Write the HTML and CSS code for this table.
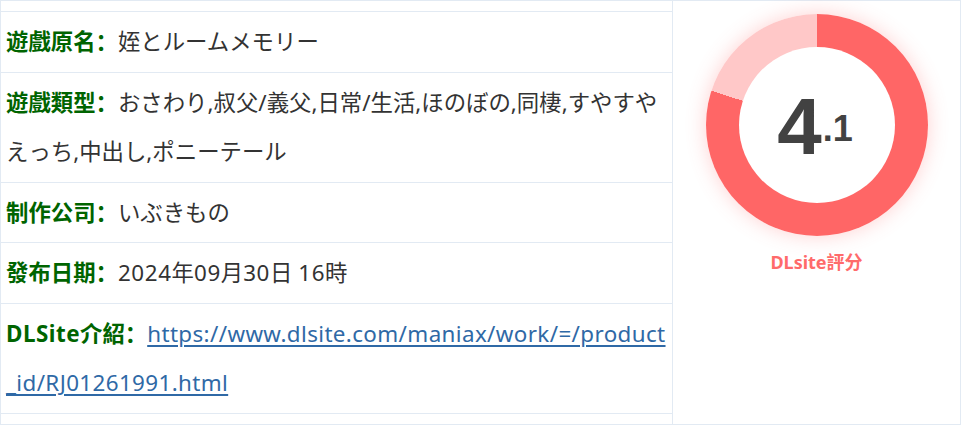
FILE: index.html
```html
<!DOCTYPE html>
<html lang="zh-CN">
<head>
<meta charset="utf-8">
<title>DLsite</title>
<link rel="stylesheet" href="styles.css">
</head>
<body>
<div class="info">
  <div class="details">
    <div class="row"><span class="label">遊戲原名：</span><span class="value">姪とルームメモリー</span></div>
    <div class="row"><span class="label">遊戲類型：</span><span class="value">おさわり,叔父/義父,日常/生活,ほのぼの,同棲,すやすやえっち,中出し,ポニーテール</span></div>
    <div class="row"><span class="label">制作公司：</span><span class="value">いぶきもの</span></div>
    <div class="row"><span class="label">發布日期：</span><span class="value"><span class="num">2024</span>年<span class="num">09</span>月<span class="num">30</span>日 <span class="num">16</span>時</span></div>
    <div class="row"><span class="label"><span class="latin">DLSite</span>介紹：</span><a class="link" href="#">https://www.dlsite.com/maniax/work/=/product<wbr>_id/RJ01261991.html</a></div>
  </div>
  <div class="score">
    <div class="donut">
      <div class="donut-hole">
        <span class="score-int">4</span><span class="score-dec">.1</span>
      </div>
    </div>
    <div class="score-label">DLsite評分</div>
  </div>
</div>
</body>
</html>
```

FILE: styles.css
```css
html, body {
  margin: 0;
  padding: 0;
  background: #ffffff;
}

.info {
  width: 961px;
  height: 425px;
  box-sizing: border-box;
  border: 1px solid #e2eaf3;
  display: grid;
  grid-template-columns: 671px 1fr;
  font-family: "Noto Sans", "Noto Sans CJK SC", sans-serif;
  font-size: 22.4px;
  color: #333333;
}

.details {
  padding: 10px 0;
}

.row {
  border-top: 1px solid #e2eaf3;
  padding: 5px 5px;
  line-height: 49.5px;
  overflow-wrap: anywhere;
}

.row:last-child {
  border-bottom: 1px solid #e2eaf3;
}

.label {
  font-weight: 700;
  color: #006400;
}

.latin {
  letter-spacing: 0.5px;
}

.value {
  color: #333333;
}

.num {
  letter-spacing: 0.6px;
}

.link {
  color: #2f69a6;
  letter-spacing: 0.38px;
  text-decoration: underline;
  text-underline-offset: 3px;
}

.score {
  border-left: 1px solid #e2eaf3;
  display: flex;
  flex-direction: column;
  align-items: center;
  padding-top: 13px;
}

.donut {
  width: 222px;
  height: 222px;
  border-radius: 50%;
  background: conic-gradient(#ff6666 0 80%, #ffc8c8 80% 100%);
  box-shadow: 0 0 20px rgba(255, 102, 102, 0.3);
  display: flex;
  align-items: center;
  justify-content: center;
}

.donut-hole {
  width: 156px;
  height: 156px;
  border-radius: 50%;
  background: #ffffff;
  display: flex;
  align-items: center;
  justify-content: center;
  font-family: "Liberation Sans", Arial, sans-serif;
  font-weight: 700;
  color: #424242;
}

.score-int {
  font-size: 80px;
  line-height: 1;
  position: relative;
  top: 2px;
  left: -2px;
}

.score-dec {
  font-size: 36px;
  line-height: 1;
  position: relative;
  top: 4px;
  left: -1px;
}

.score-label {
  margin-top: 14px;
  font-family: "Noto Sans", "Noto Sans CJK SC", sans-serif;
  font-size: 18px;
  font-weight: 700;
  line-height: 24px;
  color: #ff6b6b;
}
```
